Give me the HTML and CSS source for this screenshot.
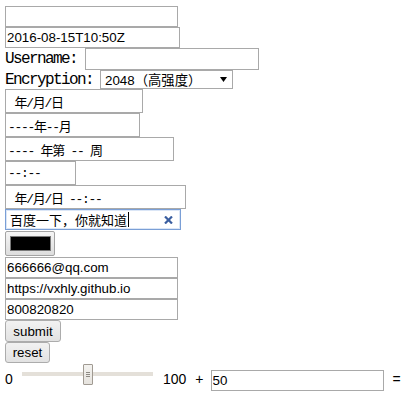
FILE: index.html
```html
<!DOCTYPE html>
<html>
<head>
<meta charset="utf-8">
<link rel="stylesheet" href="styles.css">
</head>
<body>
<form class="demo">
  <div class="row h21"><input class="field w173" type="text"></div>
  <div class="row h21"><input class="field w175" type="text" value="2016-08-15T10:50Z"></div>
  <div class="row h22"><span class="lbl">Username: </span><input class="field w174 tall" type="text"></div>
  <div class="row h19">
    <span class="lbl">Encryption: </span>
    <div class="select"><span>2048（高强度）</span><svg class="arrow" width="7" height="5" viewBox="0 0 7 5"><path d="M0 0H7L3.5 5Z" fill="#000"/></svg></div>
  </div>
  <div class="row h24"><input class="field dt w138" type="text" value=" 年/月/日"></div>
  <div class="row h24"><input class="field dt w135" type="text" value="----年--月"></div>
  <div class="row h24"><input class="field dt w169" type="text" value="---- 年第 -- 周"></div>
  <div class="row h24"><input class="field dt w71" type="text" value="--:--"></div>
  <div class="row h24"><input class="field dt w181" type="text" value=" 年/月/日 --:--"></div>
  <div class="row h22 top">
    <div class="search"><span class="stext">百度一下，你就知道</span><span class="caret"></span>
      <svg class="clear" width="9" height="8" viewBox="0 0 9 8"><path d="M1 0.5L8 7.5M8 0.5L1 7.5" stroke="#3b5fa0" stroke-width="2.2"/></svg>
    </div>
  </div>
  <div class="row h26 top"><div class="color"><span class="swatch"></span></div></div>
  <div class="row h21"><input class="field w173" type="text" value="666666@qq.com"></div>
  <div class="row h21"><input class="field w173" type="text" value="https://vxhly.github.io"></div>
  <div class="row h21"><input class="field w173" type="text" value="800820820"></div>
  <div class="row h22"><button type="button" class="btn submit">submit</button></div>
  <div class="row h21"><button type="button" class="btn reset">reset</button></div>
  <div class="row calc">
    <span class="num zero">0</span>
    <div class="range"><span class="thumb"><svg width="4" height="6" viewBox="0 0 4 6"><path d="M0 0.5H4M0 2.5H4M0 4.5H4" stroke="#8e8a84" stroke-width="1"/></svg></span></div>
    <span class="num hundred">100</span>
    <span class="num plus">+</span>
    <input class="field w173 numin" type="text" value="50">
    <span class="num eq">=</span>
  </div>
</form>
</body>
</html>
```

FILE: styles.css
```css
* { box-sizing: border-box; }
body {
  margin: 0;
  background: #fff;
  color: #000;
  font-family: "Liberation Sans", Arial, sans-serif;
}
.demo {
  padding: 6px 0 0 5px;
}
.row {
  display: flex;
  align-items: center;
}
.row.top { align-items: flex-start; }
.h19 { height: 19px; }
.h21 { height: 21px; }
.h22 { height: 22px; }
.h24 { height: 24px; }
.h26 { height: 26px; }

.field {
  margin: 0;
  height: 21px;
  border: 1px solid #a9a9a9;
  padding: 0 1px;
  background: #fff;
  color: #000;
  font: 13.33px "Liberation Sans", "Noto Sans CJK SC", sans-serif;
  outline: none;
}
.field.tall { height: 22px; }
.field.dt {
  height: 24px;
  padding-left: 2px;
  font: 13px "Liberation Mono", "Noto Sans CJK SC", monospace;
  letter-spacing: -1.3px;
}
.w71 { width: 71px; }
.w135 { width: 135px; }
.w138 { width: 138px; }
.w169 { width: 169px; }
.w173 { width: 173px; }
.w174 { width: 174px; }
.w175 { width: 175px; }
.w181 { width: 181px; }

.lbl {
  font: 16px "Liberation Mono", monospace;
  letter-spacing: -1.6px;
  white-space: pre;
}

.select {
  width: 133px;
  height: 19px;
  margin-left: -1px;
  border: 1px solid #a9a9a9;
  display: flex;
  align-items: center;
  justify-content: space-between;
  padding: 0 5px 0 4px;
  font: 13.33px "Liberation Sans", "Noto Sans CJK SC", sans-serif;
}
.arrow { display: block; margin-top: -1px; }

.search {
  width: 176px;
  height: 21px;
  border: 1px solid #7a9fd6;
  box-shadow: inset 0 0 0 1px #dbe6f6;
  display: flex;
  align-items: center;
  padding: 0 7px 0 4px;
  font: 13px "Noto Sans CJK SC", sans-serif;
}
.caret {
  width: 1px;
  height: 15px;
  background: #000;
  margin-left: 1px;
}
.clear { margin-left: auto; display: block; }

.color {
  width: 50px;
  height: 25px;
  border: 1px solid #a3a3a3;
  border-radius: 2px;
  background: linear-gradient(#f5f5f5, #dddddd);
  padding: 4px 0 0 4px;
}
.swatch {
  display: block;
  width: 41px;
  height: 15px;
  background: #000;
  border: 1px solid #7a7a7a;
}

.btn {
  margin: 0;
  height: 22px;
  padding: 0;
  border: 1px solid #acacac;
  border-radius: 3px;
  background: linear-gradient(#f2f2f2, #e2e2e2);
  color: #000;
  font: 13.33px "Liberation Sans", sans-serif;
}
.btn.submit { width: 56px; }
.btn.reset { width: 45px; height: 21px; }

.calc {
  height: 32px;
  align-items: flex-start;
}
.num {
  font: 14px "Liberation Sans", sans-serif;
  line-height: 16px;
  margin-top: 8px;
}
.zero { width: 17px; }
.range {
  width: 131px;
  height: 21px;
  margin-top: 1px;
  background: linear-gradient(#e4e0d9, #e4e0d9) no-repeat 0 8px / 100% 4px;
  display: flex;
}
.thumb {
  margin-left: 61px;
  width: 10px;
  height: 21px;
  border: 1px solid #a09a92;
  border-radius: 1px;
  background: linear-gradient(#f3f2ef, #e6e3de);
  display: flex;
  align-items: center;
  justify-content: center;
}
.thumb svg { display: block; }
.hundred { margin-left: 10px; }
.plus { margin-left: 9px; }
.numin { margin-left: 7px; margin-top: 7px; }
.eq { margin-left: 9px; }
```
